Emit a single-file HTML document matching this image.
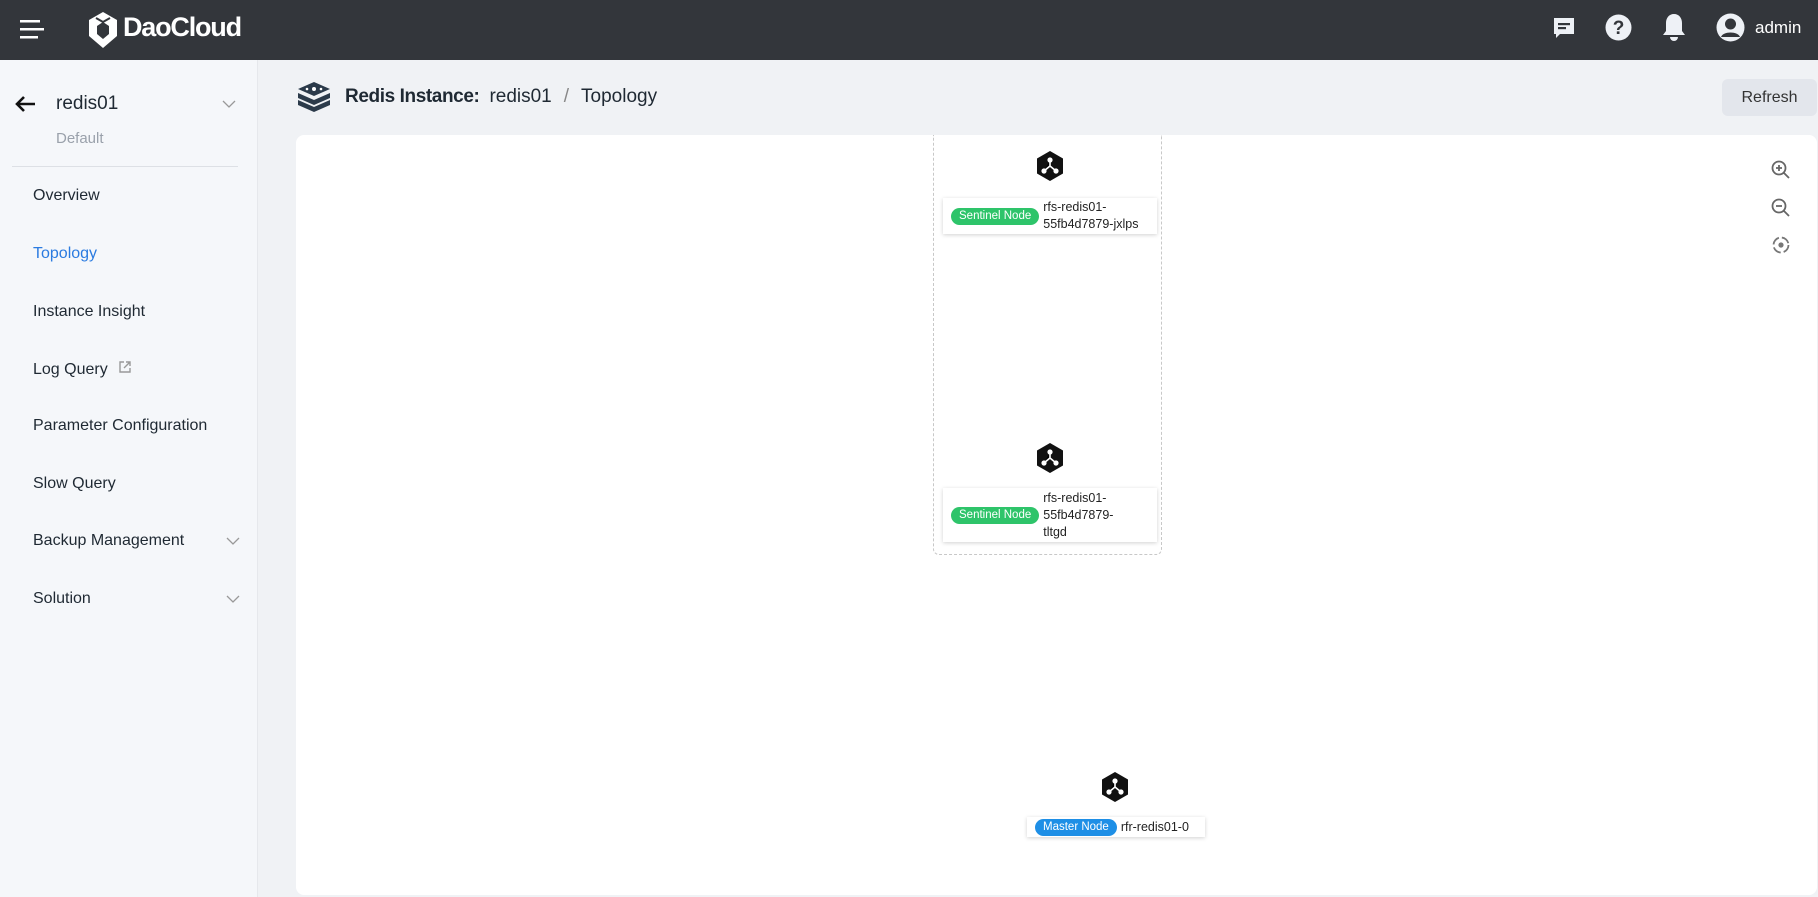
<!DOCTYPE html>
<html><head><meta charset="utf-8"><style>
*{box-sizing:border-box;margin:0;padding:0}
body{width:1818px;height:897px;overflow:hidden;background:#f0f2f5;font-family:"Liberation Sans",sans-serif;position:relative;color:#1f2933}
.hdr{position:absolute;left:0;top:0;width:1818px;height:60px;background:#33363b}
.side{position:absolute;left:0;top:60px;width:258px;height:837px;background:#f5f7fa;border-right:1px solid #e6e8ec}
.it{position:absolute;left:33px;font-size:16px;color:#1f2933}
.card{position:absolute;left:296px;top:135px;width:1521px;height:760px;background:#fff;border-radius:8px}
.lbl{position:absolute;background:#fff;box-shadow:0 1px 4px rgba(0,0,0,.18);font-size:12.5px;line-height:17px;color:#222;display:flex;align-items:center}
.tag{color:#fff;font-size:11.5px;border-radius:9px;padding:1px 8px;margin:0 4px 0 8px;white-space:nowrap;line-height:15px}
.hex{position:absolute;width:30px;height:32px}
</style></head><body>
<div class="hdr">
 <svg style="position:absolute;left:20px;top:18px" width="26" height="22"><rect x="0" y="2" width="20" height="2.5" fill="#fff"/><rect x="0" y="10" width="24" height="2.5" fill="#fff"/><rect x="0" y="18" width="18" height="2.5" fill="#fff"/></svg>
 <svg style="position:absolute;left:87px;top:12px" width="32" height="36" viewBox="0 0 32 36"><path d="M16 0L30 8V24L16 36L2 24V8Z" fill="#fff"/><path d="M16 10L10 14V22L16 27L22 22V14Z" fill="#33363b"/><path d="M9 6L16 10L23 6" stroke="#33363b" stroke-width="2" fill="none"/></svg>
 <div style="position:absolute;left:123px;top:12px;font-size:27px;font-weight:bold;color:#fff;letter-spacing:-1.2px">DaoCloud</div>
 <svg style="position:absolute;left:1551px;top:15px" width="26" height="26" viewBox="0 0 26 26"><path d="M3 3H23V19H9L5 23V19H3Z" fill="#eef1f6"/><rect x="7" y="8" width="12" height="2.2" fill="#33363b"/><rect x="7" y="12" width="8" height="2.2" fill="#33363b"/></svg>
 <svg style="position:absolute;left:1605px;top:14px" width="27" height="27"><circle cx="13.5" cy="13.5" r="13" fill="#eef1f6"/><text x="13.5" y="20" text-anchor="middle" font-size="19" font-weight="bold" fill="#33363b" font-family="Liberation Sans">?</text></svg>
 <svg style="position:absolute;left:1662px;top:13px" width="24" height="29" viewBox="0 0 24 29"><path d="M12 1C7 1 4 5 4 10V18L1 22H23L20 18V10C20 5 17 1 12 1Z" fill="#eef1f6"/><path d="M8 24H16A4 4 0 0 1 8 24Z" fill="#eef1f6"/></svg>
 <svg style="position:absolute;left:1715px;top:12px" width="31" height="31"><circle cx="15.5" cy="15.5" r="14" fill="#eef1f6"/><circle cx="15.5" cy="12" r="5.5" fill="#33363b"/><path d="M6 25C8 19 23 19 25 25" fill="#33363b"/></svg>
 <div style="position:absolute;left:1755px;top:18px;font-size:17px;color:#fff">admin</div>
</div>
<div class="side">
 <svg style="position:absolute;left:14px;top:35px" width="22" height="18"><path d="M21 9H3M10 2L3 9L10 16" stroke="#111" stroke-width="2.6" fill="none"/></svg>
 <div style="position:absolute;left:56px;top:33px;font-size:19px">redis01</div>
 <svg style="position:absolute;left:222px;top:40px" width="14" height="9"><path d="M1 1L7 7L13 1" stroke="#999" stroke-width="1.3" fill="none"/></svg>
 <div style="position:absolute;left:56px;top:70px;font-size:15px;color:#9aa1ab">Default</div>
 <div style="position:absolute;left:12px;top:106px;width:226px;height:1px;background:#dde0e5"></div>
 <div class="it" style="top:127px">Overview</div>
 <div class="it" style="top:185px;color:#2b7be0">Topology</div>
 <div class="it" style="top:243px">Instance Insight</div>
 <div class="it" style="top:300px">Log Query <svg width="14" height="14" style="margin-left:6px"><path d="M6 2H2V12H12V8M8 2H12V6M12 2L6 8" stroke="#999" stroke-width="1.4" fill="none"/></svg></div>
 <div class="it" style="top:357px">Parameter Configuration</div>
 <div class="it" style="top:415px">Slow Query</div>
 <div class="it" style="top:472px">Backup Management</div>
 <div class="it" style="top:530px">Solution</div>
 <svg style="position:absolute;left:226px;top:477px" width="14" height="9"><path d="M1 1L7 7L13 1" stroke="#999" stroke-width="1.3" fill="none"/></svg>
 <svg style="position:absolute;left:226px;top:535px" width="14" height="9"><path d="M1 1L7 7L13 1" stroke="#999" stroke-width="1.3" fill="none"/></svg>
</div>
<svg style="position:absolute;left:296px;top:80px" width="36" height="32" viewBox="0 0 36 32"><path d="M18 20L2 13V18L18 25L34 18V13Z" fill="#2b3a4a"/><path d="M18 27L2 20V25L18 32L34 25V20Z" fill="#2b3a4a"/><path d="M18 2L2 9L18 16L34 9Z" fill="#2b3a4a"/><circle cx="18" cy="9" r="2" fill="#fff"/><circle cx="11" cy="9" r="1.3" fill="#fff"/><circle cx="25" cy="9" r="1.3" fill="#fff"/></svg>
<div style="position:absolute;left:345px;top:86px;font-size:19px;color:#1f2933;white-space:nowrap"><b style="letter-spacing:-0.4px">Redis Instance:</b><span style="margin-left:10px">redis01</span><span style="color:#888;margin:0 12px">/</span>Topology</div>
<div style="position:absolute;left:1722px;top:79px;width:95px;height:37px;background:#e3e6ec;border-radius:6px;font-size:16px;line-height:37px;text-align:center;color:#333">Refresh</div>
<div class="card"></div>
<div style="position:absolute;left:933px;top:135px;width:229px;height:420px;border:1.5px dashed #c8c8c8;border-top:none;border-radius:0 0 6px 6px"></div>
<svg class="hex" style="left:1035px;top:150px" viewBox="0 0 30 32"><path d="M15 1L28 8.5V23.5L15 31L2 23.5V8.5Z" fill="#111"/><path d="M15 10V16L9 21M15 16L21 21" stroke="#fff" stroke-width="1.6"/><circle cx="15" cy="10" r="2.6" fill="#fff"/><circle cx="9" cy="21" r="2.6" fill="#fff"/><circle cx="21" cy="21" r="2.6" fill="#fff"/></svg>
<svg class="hex" style="left:1035px;top:442px" viewBox="0 0 30 32"><path d="M15 1L28 8.5V23.5L15 31L2 23.5V8.5Z" fill="#111"/><path d="M15 10V16L9 21M15 16L21 21" stroke="#fff" stroke-width="1.6"/><circle cx="15" cy="10" r="2.6" fill="#fff"/><circle cx="9" cy="21" r="2.6" fill="#fff"/><circle cx="21" cy="21" r="2.6" fill="#fff"/></svg>
<svg class="hex" style="left:1100px;top:771px" viewBox="0 0 30 32"><path d="M15 1L28 8.5V23.5L15 31L2 23.5V8.5Z" fill="#111"/><path d="M15 10V16L9 21M15 16L21 21" stroke="#fff" stroke-width="1.6"/><circle cx="15" cy="10" r="2.6" fill="#fff"/><circle cx="9" cy="21" r="2.6" fill="#fff"/><circle cx="21" cy="21" r="2.6" fill="#fff"/></svg>
<div class="lbl" style="left:943px;top:198px;width:214px;height:36px"><span class="tag" style="background:#2ec46a">Sentinel Node</span><span>rfs-redis01-<br>55fb4d7879-jxlps</span></div>
<div class="lbl" style="left:943px;top:488px;width:214px;height:54px"><span class="tag" style="background:#2ec46a">Sentinel Node</span><span>rfs-redis01-<br>55fb4d7879-<br>tltgd</span></div>
<div class="lbl" style="left:1027px;top:817px;width:178px;height:20px"><span class="tag" style="background:#1e8fe6;margin-left:8px">Master Node</span><span>rfr-redis01-0</span></div>
<svg style="position:absolute;left:1771px;top:160px" width="20" height="20"><circle cx="8" cy="8" r="6.5" stroke="#666" stroke-width="1.8" fill="none"/><path d="M13 13L18 18M5 8H11M8 5V11" stroke="#666" stroke-width="1.8"/></svg>
<svg style="position:absolute;left:1771px;top:198px" width="20" height="20"><circle cx="8" cy="8" r="6.5" stroke="#666" stroke-width="1.8" fill="none"/><path d="M13 13L18 18M5 8H11" stroke="#666" stroke-width="1.8"/></svg>
<svg style="position:absolute;left:1771px;top:235px" width="20" height="20"><circle cx="10" cy="10" r="7.5" stroke="#777" stroke-width="1.8" fill="none" stroke-dasharray="9 3"/><circle cx="10" cy="10" r="2.6" fill="#777"/></svg>
</body></html>
